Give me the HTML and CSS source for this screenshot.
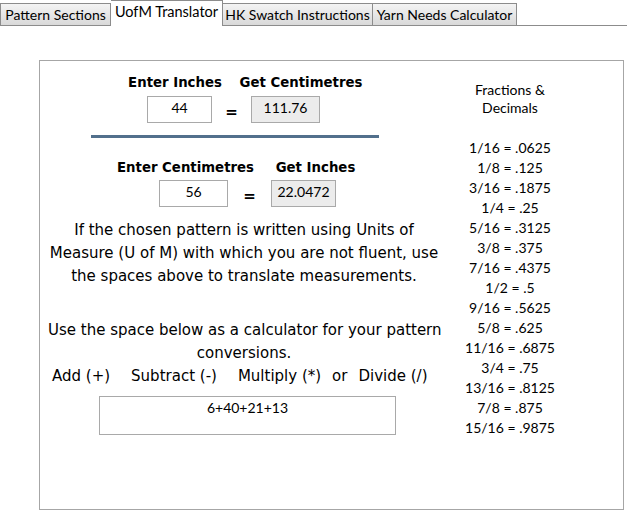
FILE: index.html
```html
<!DOCTYPE html>
<html lang="en">
<head>
    <meta charset="UTF-8">
    <title>UofM Translator</title>
    <link rel="stylesheet" href="styles.css">
</head>
<body>
    <!-- tabs -->
    <div class="tabs">
        <div class="tab t1">Pattern Sections</div>
        <div class="tab t2 active">UofM Translator</div>
        <div class="tab t3">HK Swatch Instructions</div>
        <div class="tab t4">Yarn Needs Calculator</div>
        <div class="tab-rest"></div>
    </div>

    <div class="panel">
        <div class="left">
            <div class="labels row1">
                <div class="lbl l1a">Enter Inches</div>
                <div class="lbl l1b">Get Centimetres</div>
            </div>
            <div class="inputs in1">
                <div class="box inp w65">44</div>
                <div class="eq e1">=</div>
                <div class="box out w69">111.76</div>
            </div>

            <div class="divider"></div>

            <div class="labels row2">
                <div class="lbl l2a">Enter Centimetres</div>
                <div class="lbl l2b">Get Inches</div>
            </div>
            <div class="inputs in2">
                <div class="box inp w69">56</div>
                <div class="eq e2">=</div>
                <div class="box out w65">22.0472</div>
            </div>

            <p class="note">If the chosen pattern is written using Units of<br>Measure (U of M) with which you are not fluent, use<br>the spaces above to translate measurements.</p>

            <p class="note note2">Use the space below as a calculator for your pattern<br>conversions.</p>
            <div class="ops">
                <span>Add (+)</span>
                <span class="big">Subtract (-)</span>
                <span class="big">Multiply (*)</span>
                <span class="small">or</span>
                <span class="small">Divide (/)</span>
            </div>

            <div class="calc">6+40+21+13</div>
        </div>

        <div class="right">
            <div class="fr-title">Fractions &amp;<br>Decimals</div>
            <div class="fr-list">
                <div>1/16 = .0625</div>
                <div>1/8 = .125</div>
                <div>3/16 = .1875</div>
                <div>1/4 = .25</div>
                <div>5/16 = .3125</div>
                <div>3/8 = .375</div>
                <div>7/16 = .4375</div>
                <div>1/2 = .5</div>
                <div>9/16 = .5625</div>
                <div>5/8 = .625</div>
                <div>11/16 = .6875</div>
                <div>3/4 = .75</div>
                <div>13/16 = .8125</div>
                <div>7/8 = .875</div>
                <div>15/16 = .9875</div>
            </div>
        </div>
    </div>
</body>
</html>
```

FILE: styles.css
```css
body {
    margin: 0;
    background: #fff;
    font-family: "Lato", "Liberation Sans", sans-serif;
    color: #000;
}

/* tab strip */
.tabs {
    display: flex;
    align-items: flex-end;
    height: 26px;
}
.tab {
    box-sizing: border-box;
    height: 23px;
    border: 1px solid #8c8c8c;
    border-left: none;
    background: linear-gradient(#f4f4f4, #d9d9d9);
    font-size: 14px;
    line-height: 21px;
    text-align: center;
    white-space: nowrap;
}
.t1 { width: 111px; border-left: 1px solid #8c8c8c; }
.t2 { width: 112px; }
.t3 { width: 150px; }
.t4 { width: 144px; }
.tab.active {
    height: 26px;
    background: #fff;
    border-bottom: none;
    line-height: 22px;
    font-size: 14.5px;
}
.tab-rest {
    flex: 1;
    border-bottom: 1px solid #8c8c8c;
}

/* main panel */
.panel {
    box-sizing: border-box;
    display: flex;
    margin: 34px 0 0 39px;
    width: 585px;
    height: 450px;
    border: 1px solid #a6a6a6;
}
.left {
    width: 400px;
    font-family: "DejaVu Sans", sans-serif;
}
.right {
    width: 140px;
    text-align: center;
    font-size: 14px;
    padding-top: 20px;
}

.labels {
    display: flex;
    height: 20px;
    line-height: 20px;
    font-size: 13.3px;
    font-weight: bold;
}
.lbl { text-align: center; white-space: nowrap; }
.row1 { margin: 12px 0 0 80px; }
.l1a { width: 110px; }
.l1b { width: 130px; margin-left: 6px; }
.row2 { margin: 20px 0 0 75px; }
.l2a { width: 141px; }
.l2b { width: 111px; margin-left: 4px; }

.inputs {
    display: flex;
}
.in1 { margin: 3px 0 0 107px; }
.in2 { margin: 2px 0 0 119px; }
.box {
    box-sizing: border-box;
    height: 27px;
    border: 1px solid #a9a9a9;
    text-align: center;
    font-family: "Lato", "Liberation Sans", sans-serif;
    font-size: 14px;
    line-height: 22px;
}
.out { background: #ececec; }
.w65 { width: 65px; }
.w69 { width: 69px; }
.eq {
    font-weight: bold;
    font-size: 15px;
    text-align: center;
    padding-top: 7px;
}
.e1 { width: 39px; }
.e2 { width: 43px; }

.divider {
    margin: 12px 0 0 51px;
    width: 288px;
    height: 3px;
    background: #52708c;
}

.note {
    margin: 12px 0 0 8px;
    text-align: center;
    font-size: 15px;
    line-height: 23px;
    white-space: nowrap;
}
.note2 { margin-top: 31px; }
.ops {
    display: flex;
    margin-left: 12px;
    font-size: 15px;
    line-height: 23px;
    white-space: nowrap;
}
.ops .big { margin-left: 21px; }
.ops .small { margin-left: 11px; }

.calc {
    box-sizing: border-box;
    margin: 8px 0 0 59px;
    width: 297px;
    height: 39px;
    border: 1px solid #a9a9a9;
    text-align: center;
    font-family: "Lato", "Liberation Sans", sans-serif;
    font-size: 14px;
    padding-top: 2px;
}

.fr-title { line-height: 18px; }
.fr-list {
    margin-top: 21px;
    line-height: 20px;
}
```
